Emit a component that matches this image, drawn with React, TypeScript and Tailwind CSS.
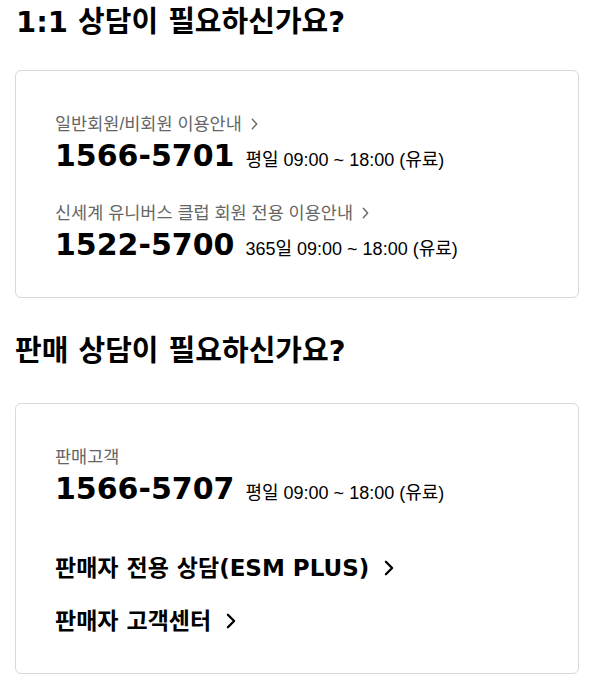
const bold = { fontFamily: '"DejaVu Sans", "Noto Sans CJK KR", sans-serif' };

function Chevron({ className, width = 1.6 }: { className: string; width?: number }) {
  return (
    <svg viewBox="0 0 8 14" className={className} fill="none" stroke="currentColor" strokeWidth={width} strokeLinecap="round" strokeLinejoin="round" preserveAspectRatio="none">
      <path d="M1.5 1.5 L6.5 7 L1.5 12.5" />
    </svg>
  );
}

function Label({ text, arrow = true }: { text: string; arrow?: boolean }) {
  return (
    <div className="flex items-center gap-[9px] text-[17.5px] leading-[20px] text-[#666] font-['Liberation_Sans','Noto_Sans_CJK_KR',sans-serif]">
      <span>{text}</span>
      {arrow && <Chevron className="w-[7px] h-[12px] text-[#666]" />}
    </div>
  );
}

function Phone({ num, hours }: { num: string; hours: string }) {
  return (
    <div className="flex items-baseline gap-[11px] mt-[5px]">
      <span className="text-[30px] leading-[34px] font-bold text-black font-['DejaVu_Sans','Noto_Sans_CJK_KR',sans-serif]">{num}</span>
      <span className="text-[18px] leading-[20px] text-black font-['Liberation_Sans','Noto_Sans_CJK_KR',sans-serif]">{hours}</span>
    </div>
  );
}

function SellerLink({ text }: { text: string }) {
  return (
    <a href="#" className="flex items-center gap-[15px] text-[23px] leading-[28px] font-bold text-black">
      <span style={bold}>{text}</span>
      <Chevron className="w-[10px] h-[16px] text-black" width={1.8} />
    </a>
  );
}

export default function App() {
  return (
    <div className="bg-white pl-[15px] pr-[13px] pt-[5px] pb-[14px]" style={bold}>
      <h2 className="text-[29px] leading-[34px] font-bold text-black pl-[1px]">1:1 상담이 필요하신가요?</h2>

      <div className="mt-[31px] border border-[#d9d9d9] rounded-[6px] pl-[39px] pr-4 pt-[43px] pb-[35px]">
        <Label text="일반회원/비회원 이용안내" />
        <Phone num="1566-5701" hours="평일 09:00 ~ 18:00 (유료)" />
        <div className="mt-[30px]">
          <Label text="신세계 유니버스 클럽 회원 전용 이용안내" />
        </div>
        <Phone num="1522-5700" hours="365일 09:00 ~ 18:00 (유료)" />
      </div>

      <h2 className="mt-[36px] text-[29px] leading-[34px] font-bold text-black">판매 상담이 필요하신가요?</h2>

      <div className="mt-[35px] border border-[#d9d9d9] rounded-[6px] pl-[39px] pr-4 pt-[43px] pb-[38px]">
        <Label text="판매고객" arrow={false} />
        <Phone num="1566-5707" hours="평일 09:00 ~ 18:00 (유료)" />
        <div className="mt-[48px] flex flex-col gap-[25px]">
          <SellerLink text="판매자 전용 상담(ESM PLUS)" />
          <SellerLink text="판매자 고객센터" />
        </div>
      </div>
    </div>
  );
}
